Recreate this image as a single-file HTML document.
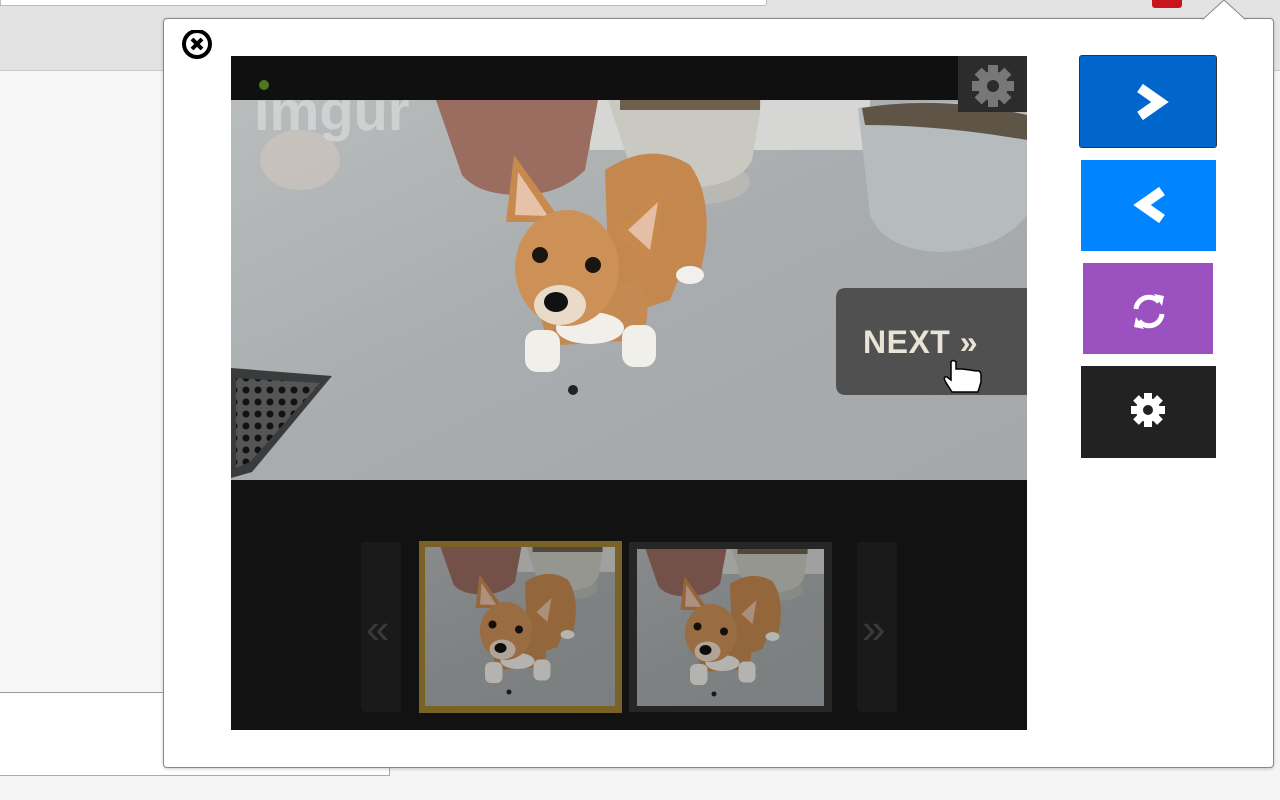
<!DOCTYPE html>
<html><head><meta charset="utf-8"><style>
html,body{margin:0;padding:0;width:1280px;height:800px;overflow:hidden;background:#f5f5f5;font-family:"Liberation Sans",sans-serif;position:relative}
.a{position:absolute}
</style></head><body>
<div class="a" style="left:0;top:0;width:1280px;height:70px;background:#e3e3e3;border-bottom:1px solid #c8c8c8"></div>
<div class="a" style="left:0;top:0;width:765px;height:5px;background:#fff;border:1px solid #bbb;border-top:none;border-radius:0 0 3px 0"></div>
<div class="a" style="left:1152px;top:0;width:30px;height:8px;background:#c8141c;border-radius:0 0 3px 3px"></div>
<div class="a" style="left:0;top:71px;width:163px;height:621px;background:#f7f7f7;border-bottom:1px solid #999"></div>
<div class="a" style="left:0;top:693px;width:389px;height:82px;background:#fff;border-right:1px solid #aaa;border-bottom:1px solid #aaa"></div>

<div class="a" style="left:163px;top:18px;width:1109px;height:748px;background:#fff;border:1px solid #888;border-radius:4px;box-shadow:0 1px 3px rgba(0,0,0,.2)"></div>
<svg class="a" style="left:1200px;top:0" width="60" height="22"><path d="M2 20 L24 0 L46 20" fill="#fff" stroke="#888" stroke-width="1"/><rect x="0" y="19.5" width="60" height="3" fill="#fff"/></svg>

<svg class="a" style="left:180px;top:30px" width="36" height="30"><circle cx="17" cy="14" r="13" fill="#fff" stroke="#000" stroke-width="4"/><path d="M12 9 L22 19 M22 9 L12 19" stroke="#000" stroke-width="4"/></svg>

<svg class="a" style="left:0;top:0" width="1280" height="800">
<defs>
<linearGradient id="fl" x1="0" y1="0" x2="1" y2="1"><stop offset="0" stop-color="#b9bcbc"/><stop offset="0.5" stop-color="#a8acae"/><stop offset="1" stop-color="#a4a8aa"/></linearGradient>
<pattern id="gr" width="12" height="12" patternUnits="userSpaceOnUse"><rect width="12" height="12" fill="#555"/><circle cx="6" cy="6" r="3.5" fill="#111"/></pattern>
<clipPath id="pc"><rect x="231" y="100" width="796" height="380"/></clipPath>
<g id="scene">
<rect x="231" y="100" width="796" height="380" fill="url(#fl)"/>
<rect x="590" y="100" width="280" height="50" fill="#d6d7d5"/>
<ellipse cx="300" cy="160" rx="40" ry="30" fill="#d8c9c0" opacity=".5"/>
<path d="M436 100 L598 100 L585 170 Q560 195 520 195 Q478 195 462 175 Z" fill="#9a6d60"/>
<ellipse cx="702" cy="182" rx="48" ry="22" fill="#b9b8b2"/>
<path d="M608 100 L762 100 L752 160 Q740 185 690 188 Q640 185 628 160 Z" fill="#c9c8c1"/>
<rect x="620" y="100" width="140" height="10" fill="#6e604c"/>
<path d="M858 108 Q940 95 1027 110 L1027 215 Q1000 250 940 252 Q885 250 870 215 Z" fill="#b6bbbd"/>
<path d="M862 108 Q940 95 1027 115 L1027 140 Q940 125 865 125 Z" fill="#5e5546"/>
<path d="M231 368 L332 376 L252 472 L231 478 Z" fill="#3a3b3c"/>
<path d="M236 378 L320 383 L250 462 L236 468 Z" fill="url(#gr)"/>
<path d="M605 170 Q650 140 690 165 Q712 195 705 250 L700 275 L680 275 L670 300 L610 320 Z" fill="#c4884f"/>
<ellipse cx="690" cy="275" rx="14" ry="9" fill="#f1f0ec"/>
<path d="M540 300 Q540 340 560 345 L640 340 Q655 310 640 280 Z" fill="#c48a52"/>
<ellipse cx="590" cy="328" rx="34" ry="16" fill="#f2efea"/>
<rect x="525" y="330" width="35" height="42" rx="12" fill="#f1efea"/>
<rect x="622" y="325" width="34" height="42" rx="12" fill="#f1efea"/>
<path d="M514 155 L506 222 L562 222 Z" fill="#c8894e"/>
<path d="M518 172 L515 215 L548 216 Z" fill="#e6c2a8"/>
<path d="M665 190 L612 232 L652 262 Z" fill="#c8894e"/>
<path d="M658 202 L628 230 L650 250 Z" fill="#e4bfa5"/>
<ellipse cx="567" cy="268" rx="52" ry="58" fill="#cd9158"/>
<ellipse cx="560" cy="305" rx="26" ry="20" fill="#eadbc9"/>
<circle cx="540" cy="255" r="8" fill="#1a1512"/>
<circle cx="593" cy="265" r="8" fill="#1a1512"/>
<ellipse cx="556" cy="302" rx="12" ry="10" fill="#111"/>
<circle cx="573" cy="390" r="5" fill="#222"/>
</g>
</defs>
<rect x="231" y="56" width="796" height="674" fill="#121212"/>
<g clip-path="url(#pc)"><use href="#scene"/></g>
<text x="254" y="130" font-family="Liberation Sans" font-weight="bold" font-size="56" fill="#fff" fill-opacity=".35">imgur</text>
<rect x="231" y="56" width="796" height="44" fill="#101010"/>
<circle cx="264" cy="85" r="5" fill="#4e7a1c"/>
<rect x="958" y="56" width="69" height="56" fill="#2c2c2c"/>
<g transform="translate(993,86)" fill="#777">
<circle r="15"/>
<g><rect x="-5" y="-21" width="10" height="42"/><rect x="-5" y="-21" width="10" height="42" transform="rotate(45)"/><rect x="-5" y="-21" width="10" height="42" transform="rotate(90)"/><rect x="-5" y="-21" width="10" height="42" transform="rotate(135)"/></g>
<circle r="6" fill="#2c2c2c"/>
</g>
<path d="M846 288 L1027 288 L1027 395 L846 395 Q836 395 836 385 L836 298 Q836 288 846 288 Z" fill="#4b4b4b" fill-opacity=".95"/>
<text x="863" y="353" font-family="Liberation Sans" font-weight="bold" font-size="32" letter-spacing="0.5" fill="#e8e4d6">NEXT »</text>
<path d="M951 362 L951 380 L947 377 Q943 376 945 381 L952 392 L978 392 L981 382 L981 374 Q980 370 976 371 L970 370 L962 369 L956 369 L956 362 Q953 359 951 362 Z" fill="#fff" stroke="#000" stroke-width="1.5"/>

<rect x="361" y="542" width="40" height="170" rx="4" fill="#1a1a1a"/>
<text x="366" y="643" font-size="42" fill="#3a3a3a" font-family="Liberation Sans">«</text>
<rect x="857" y="542" width="40" height="170" rx="4" fill="#1a1a1a"/>
<text x="862" y="643" font-size="42" fill="#3a3a3a" font-family="Liberation Sans">»</text>

<rect x="419" y="541" width="203" height="172" fill="#7a6224"/>
<svg x="425" y="547" width="190" height="159" viewBox="405 100 380 318" preserveAspectRatio="none"><use href="#scene"/><rect x="231" y="90" width="796" height="390" fill="#000" fill-opacity=".25"/></svg>
<rect x="629" y="542" width="203" height="170" fill="#262626"/>
<svg x="637" y="549" width="187" height="157" viewBox="419 100 374 314" preserveAspectRatio="none"><use href="#scene"/><rect x="231" y="90" width="796" height="390" fill="#000" fill-opacity=".25"/></svg>
</svg>

<div class="a" style="left:1079px;top:55px;width:136px;height:91px;background:#0066cc;border:1px solid #333;border-radius:3px"></div>
<div class="a" style="left:1081px;top:160px;width:135px;height:91px;background:#0084ff"></div>
<div class="a" style="left:1083px;top:263px;width:130px;height:91px;background:#9b51bf"></div>
<div class="a" style="left:1081px;top:366px;width:135px;height:92px;background:#222"></div>
<svg class="a" style="left:1080px;top:56px" width="140" height="410">
<path d="M60 32 L80 46 L60 60" fill="none" stroke="#fff" stroke-width="10" stroke-linejoin="miter"/>
<path d="M82 135 L62 149 L82 163" fill="none" stroke="#fff" stroke-width="10"/>
<g fill="none" stroke="#fff" stroke-width="5">
<path d="M56 253 A13 13 0 0 1 79 246"/><path d="M82 258 A13 13 0 0 1 59 265"/>
</g>
<path d="M74 238 L84 240 L82 250 Z M64 273 L54 271 L56 261 Z" fill="#fff"/>
<g transform="translate(68,354)" fill="#fff"><circle r="12"/><rect x="-4" y="-17" width="8" height="34"/><rect x="-4" y="-17" width="8" height="34" transform="rotate(45)"/><rect x="-4" y="-17" width="8" height="34" transform="rotate(90)"/><rect x="-4" y="-17" width="8" height="34" transform="rotate(135)"/><circle r="5" fill="#222"/></g>
</svg>
</body></html>
